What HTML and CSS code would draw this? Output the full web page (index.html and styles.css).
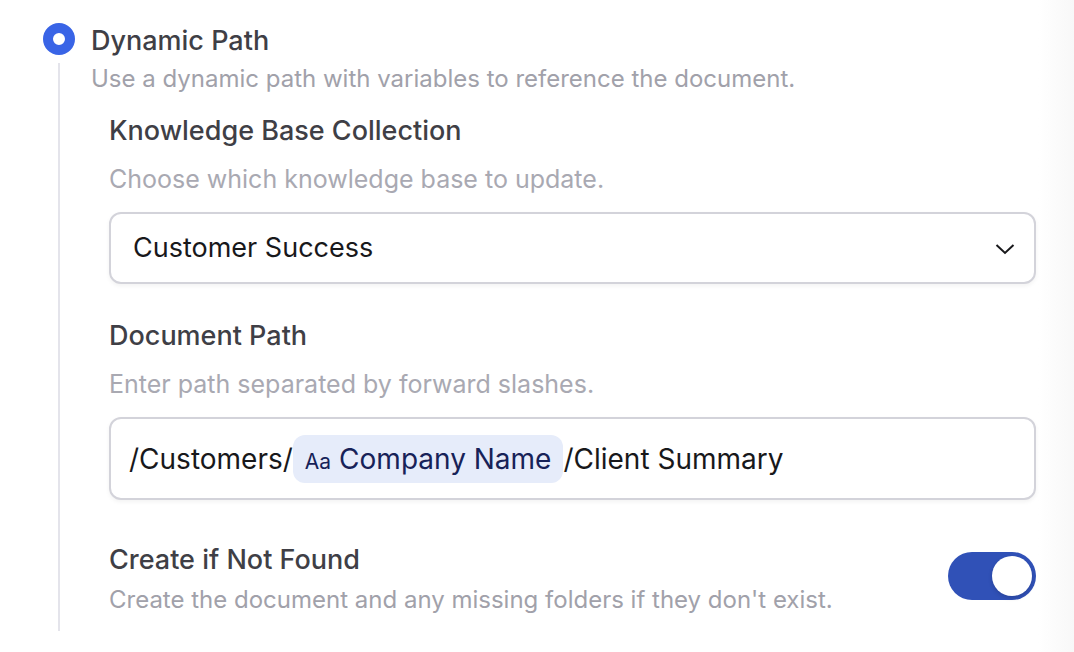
FILE: index.html
```html
<!DOCTYPE html>
<html lang="en">
<head>
  <meta charset="UTF-8" />
  <meta name="viewport" content="width=device-width, initial-scale=1" />
  <title>Dynamic Path</title>
  <link rel="stylesheet" href="styles.css">
</head>
<body>
  <form class="option">
    <div class="rail">
      <input type="radio" class="radio" id="dynamicPath" name="pathType" checked>
      <div class="line"></div>
    </div>

    <div class="content">
      <label class="title" for="dynamicPath">Dynamic Path</label>
      <p class="description">Use a dynamic path with variables to reference the document.</p>

      <div class="fields">
        <!-- Collection -->
        <div class="field">
          <label class="label" for="collection">Knowledge Base Collection</label>
          <p class="hint">Choose which knowledge base to update.</p>
          <div class="select-wrap">
            <select class="select" id="collection">
              <option>Customer Success</option>
            </select>
            <svg class="chevron" width="20" height="20" viewBox="0 0 20 20" aria-hidden="true">
              <path d="M1.5 7 L10 15 L18.5 7" fill="none" stroke="currentColor" stroke-width="2" />
            </svg>
          </div>
        </div>

        <!-- Document path -->
        <div class="field">
          <label class="label" for="pathStart">Document Path</label>
          <p class="hint">Enter path separated by forward slashes.</p>
          <div class="path-box">
            <input type="text" class="path-text" id="pathStart" value="/Customers/">
            <span class="variable"><span class="variable-type">Aa</span>Company Name</span>
            <input type="text" class="path-text path-end" aria-label="Document path, after variable" value="/Client Summary">
          </div>
        </div>

        <!-- Create toggle -->
        <div class="toggle-row">
          <div class="toggle-text">
            <label class="label" for="createDoc">Create if Not Found</label>
            <p class="description">Create the document and any missing folders if they don't exist.</p>
          </div>
          <input type="checkbox" role="switch" class="switch" id="createDoc" checked>
        </div>
      </div>
    </div>
  </form>
</body>
</html>
```
FILE: styles.css
```css
* {
  box-sizing: border-box;
}

body {
  margin: 0;
  min-height: 100vh;
  font-family: Inter, "Open Sans", sans-serif;
  font-size: 27px;
  line-height: 36px;
  color: #18181b;
  background: linear-gradient(to left, #f8f8f8, #fff 36px);
}

p {
  margin: 0;
}

.option {
  display: flex;
  gap: 16px;
  padding: 23px 38px 20px 43px;
}

.rail {
  display: flex;
  flex-direction: column;
  align-items: center;
  gap: 8px;
  width: 32px;
  flex-shrink: 0;
}

.radio {
  appearance: none;
  width: 32px;
  height: 32px;
  margin: 0;
  border: 10px solid #3964e6;
  border-radius: 50%;
  background: #fff;
  cursor: pointer;
}

.line {
  flex: 1;
  width: 2px;
  background: #e4e4eb;
}

.content {
  flex: 1;
  min-width: 0;
}

.title,
.label {
  display: block;
  font-weight: 500;
  color: #3f3f46;
}

.description {
  margin-top: 2px;
  font-size: 24px;
  color: #a1a1aa;
}

.fields {
  padding: 16px 0 13px 18px;
}

.field {
  margin-bottom: 34px;
}

.hint {
  margin: 12px 0 15px;
  font-size: 25px;
  color: #a9a9b2;
}

.select-wrap {
  display: grid;
  align-items: center;
}

.select,
.chevron {
  grid-area: 1 / 1;
}

.select,
.path-box {
  width: 100%;
  border: 2px solid #d3d3da;
  border-radius: 12px;
  background: #fff;
  box-shadow: 0 2px 4px rgba(0, 0, 0, 0.05);
}

.select {
  appearance: none;
  height: 72px;
  padding: 0 60px 0 22px;
  font: inherit;
  color: inherit;
}

.chevron {
  justify-self: end;
  margin-right: 21px;
  pointer-events: none;
}

.path-box {
  display: flex;
  align-items: center;
  height: 83px;
  padding: 0 18px;
  font-size: 28px;
}

.path-text {
  field-sizing: content;
  min-width: 0;
  padding: 0;
  border: none;
  outline: none;
  background: none;
  font: inherit;
  color: inherit;
}

.path-end {
  flex: 1;
}

.variable {
  display: flex;
  align-items: baseline;
  gap: 8px;
  padding: 6px 12px;
  border-radius: 12px;
  background: #e6ecfa;
  color: #172258;
  white-space: nowrap;
}

.variable-type {
  font-size: 21px;
  line-height: 24px;
}

.toggle-row {
  display: flex;
  align-items: flex-start;
  justify-content: space-between;
  gap: 24px;
  padding-top: 8px;
}

.toggle-text {
  display: grid;
  gap: 2px;
}

.switch {
  appearance: none;
  flex-shrink: 0;
  display: flex;
  width: 88px;
  height: 48px;
  margin: 10px 0 0;
  padding: 4px;
  border-radius: 24px;
  background: #d4d4d8;
  cursor: pointer;
}

.switch::before {
  content: "";
  width: 40px;
  height: 40px;
  border-radius: 50%;
  background: #fff;
  box-shadow: 0 2px 4px rgba(0, 0, 0, 0.15);
}

.switch:checked {
  justify-content: flex-end;
  background: #3051b7;
}
```
